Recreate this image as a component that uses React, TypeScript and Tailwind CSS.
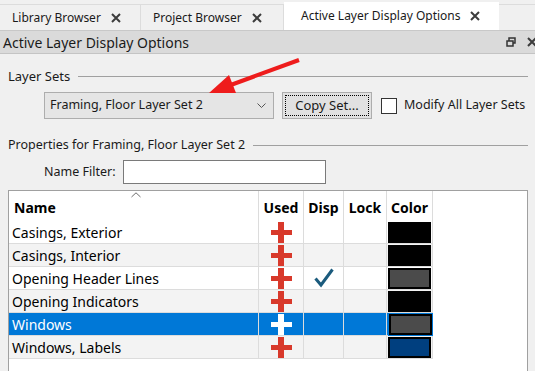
import type { ReactNode } from 'react';

const ROWS = [
  { name: 'Casings, Exterior', disp: false, color: 'black', bg: 'bg-white' },
  { name: 'Casings, Interior', disp: false, color: 'black', bg: 'bg-[#f3f3f3]' },
  { name: 'Opening Header Lines', disp: true, color: 'gray', bg: 'bg-white' },
  { name: 'Opening Indicators', disp: false, color: 'black', bg: 'bg-[#f3f3f3]' },
  { name: 'Windows', disp: false, color: 'gray', bg: 'bg-[#0078d7]', selected: true },
  { name: 'Windows, Labels', disp: false, color: 'navy', bg: 'bg-[#f3f3f3]' },
];

function CloseX({ className = '' }: { className?: string }) {
  return (
    <svg width="10" height="10" viewBox="0 0 10 10" className={className}>
      <path d="M1 1 L9 9 M9 1 L1 9" stroke="#3c3c3c" strokeWidth="2" />
    </svg>
  );
}

function Tab({ label, active, width }: { label: string; active?: boolean; width: string }) {
  return (
    <div
      className={
        active
          ? `${width} flex h-[28px] items-center whitespace-nowrap bg-white pl-[17px] text-[12px] text-[#1a1a1a]`
          : `${width} flex h-[26px] items-center whitespace-nowrap border-t border-r border-[#dcdcdc] bg-[#f0f0f0] pl-[12px] text-[12px] text-[#1a1a1a]`
      }
    >
      <span>{label}</span>
      <CloseX className="ml-[10px]" />
    </div>
  );
}

function Plus({ white }: { white?: boolean }) {
  const c = white ? '#ffffff' : '#d8392b';
  return (
    <svg width="21" height="21" viewBox="0 0 21 21">
      <rect x="0" y="8" width="21" height="5" fill={c} />
      <rect x="7" y="0" width="6" height="21" fill={c} />
    </svg>
  );
}

function Check() {
  return (
    <svg width="20" height="20" viewBox="0 0 20 20">
      <path d="M1.5 10.5 L7 17 L18.5 1.5" fill="none" stroke="#1b5b7d" strokeWidth="3" />
    </svg>
  );
}

function Swatch({ color, selected }: { color: string; selected?: boolean }) {
  if (color === 'black') return <div className="h-[21px] w-[43px] bg-black" />;
  if (color === 'navy')
    return <div className="h-[21px] w-[43px] border-2 border-black bg-[#003f7f]" />;
  return (
    <div className={selected ? 'h-[23px] w-[45px] border border-[#0078d7]' : ''}>
      <div className="h-[21px] w-[43px] border-2 border-black bg-[#4b4b4b]" />
    </div>
  );
}

function GroupHeader({ children }: { children: ReactNode }) {
  return (
    <div className="flex items-center whitespace-nowrap text-[12.5px] leading-[16px] text-[#1a1a1a]">
      <span>{children}</span>
      <div className="ml-[8px] h-px flex-1 bg-[#a0a0a0]" />
    </div>
  );
}

export default function App() {
  return (
    <div className="relative h-[371px] w-[535px] overflow-hidden bg-[#f0f0f0] font-['Noto_Sans',sans-serif]">
      {/* Tab strip */}
      <div className="flex h-[31px] items-end border-b border-[#c8c8c8] bg-[#f0f0f0]">
        <Tab label="Library Browser" width="w-[141px]" />
        <Tab label="Project Browser" width="w-[143px]" />
        <Tab label="Active Layer Display Options" width="w-[215px]" active />
        <div className="h-[26px] flex-1 border-t border-[#dcdcdc]" />
      </div>

      {/* Panel title bar */}
      <div className="flex h-[23px] items-center whitespace-nowrap border-b border-[#c4c4c4] bg-[#dadada] pl-[3px] text-[14px] text-[#1a1a1a]">
        <span>Active Layer Display Options</span>
        <div className="ml-auto flex items-center gap-[11px]">
          <svg width="10" height="10" viewBox="0 0 10 10">
            <rect x="3" y="1" width="6" height="5" fill="none" stroke="#333" strokeWidth="1.5" />
            <rect x="1" y="4" width="6" height="5" fill="#dadada" stroke="#333" strokeWidth="1.5" />
          </svg>
          <CloseX className="-mr-[2px]" />
        </div>
      </div>

      {/* Content */}
      <div className="pl-[8px] pr-[7px]">
        <div className="mt-[14px]">
          <GroupHeader>
            <span className="text-[13px]">Layer Sets</span>
          </GroupHeader>
        </div>

        <div className="ml-[36px] mt-[7px] flex items-center whitespace-nowrap">
          <div className="flex h-[27px] w-[230px] items-center border border-[#adadad] bg-[#e5e5e5] pl-[5px] pr-[7px] text-[12.5px] text-[#1a1a1a]">
            <span>Framing, Floor Layer Set 2</span>
            <svg width="9" height="6" viewBox="0 0 9 6" className="ml-auto">
              <path d="M0.5 0.5 L4.5 4.5 L8.5 0.5" fill="none" stroke="#555" strokeWidth="1" />
            </svg>
          </div>
          <div className="ml-[8px] flex h-[27px] w-[90px] items-center justify-center border border-[#adadad] bg-[#e1e1e1] p-[2px]">
            <div className="flex h-full w-full items-center justify-center border border-dotted border-black text-[13px] text-[#1a1a1a]">
              Copy Set...
            </div>
          </div>
          <div className="ml-[9px] h-[16px] w-[16px] border border-[#333333] bg-white" />
          <span className="ml-[7px] text-[12.5px] text-[#1a1a1a]">Modify All Layer Sets</span>
        </div>

        <div className="mt-[18px]">
          <GroupHeader>Properties for Framing, Floor Layer Set 2</GroupHeader>
        </div>

        <div className="ml-[36px] mt-[7px] flex items-center">
          <span className="w-[79px] whitespace-nowrap text-[12.5px] text-[#1a1a1a]">Name Filter:</span>
          <div className="h-[24px] w-[203px] border border-[#7a7a7a] bg-white" />
        </div>

        {/* Layer table */}
        <div className="relative mt-[6px] h-[200px] border border-[#a0a0a0] bg-white">
          <svg width="10" height="6" viewBox="0 0 10 6" className="absolute left-[122px] top-[1px]">
            <path d="M0.5 5 L5 0.8 L9.5 5" fill="none" stroke="#6d6d6d" strokeWidth="1" />
          </svg>
          <div className="grid grid-cols-[250px_45px_40px_43px_46px]">
            <div className="flex h-[30px] items-end border-r border-[#dcdcdc] pb-[3px] pl-[5px] text-[14px] font-bold text-black">
              Name
            </div>
            {['Used', 'Disp', 'Lock', 'Color'].map((h) => (
              <div
                key={h}
                className="flex h-[30px] items-end justify-center border-r border-[#dcdcdc] pb-[3px] text-[14px] font-bold text-black"
              >
                {h}
              </div>
            ))}
            {ROWS.map((r) => {
              const text = r.selected ? 'text-white' : 'text-black';
              return (
                <div key={r.name} className="contents">
                  <div
                    className={`flex h-[23px] items-center whitespace-nowrap border-r border-b border-[#dcdcdc] pl-[3px] text-[14px] ${r.bg} ${text}`}
                  >
                    {r.name}
                  </div>
                  <div className={`flex h-[23px] items-center justify-center border-r border-b border-[#dcdcdc] ${r.bg}`}>
                    <Plus white={r.selected} />
                  </div>
                  <div className={`flex h-[23px] items-center justify-center border-r border-b border-[#dcdcdc] ${r.bg}`}>
                    {r.disp && <Check />}
                  </div>
                  <div className={`h-[23px] border-r border-b border-[#dcdcdc] ${r.bg}`} />
                  <div className={`flex h-[23px] items-center border-r border-b border-[#dcdcdc] pl-px ${r.bg}`}>
                    <Swatch color={r.color} selected={r.selected} />
                  </div>
                </div>
              );
            })}
          </div>
        </div>
      </div>

      {/* Red annotation arrow */}
      <svg width="535" height="371" className="pointer-events-none absolute left-0 top-0">
        <line x1="299" y1="60" x2="228" y2="86" stroke="#ee1c1c" strokeWidth="4" />
        <polygon points="209,93 229,75 236,93" fill="#ee1c1c" />
      </svg>
    </div>
  );
}
